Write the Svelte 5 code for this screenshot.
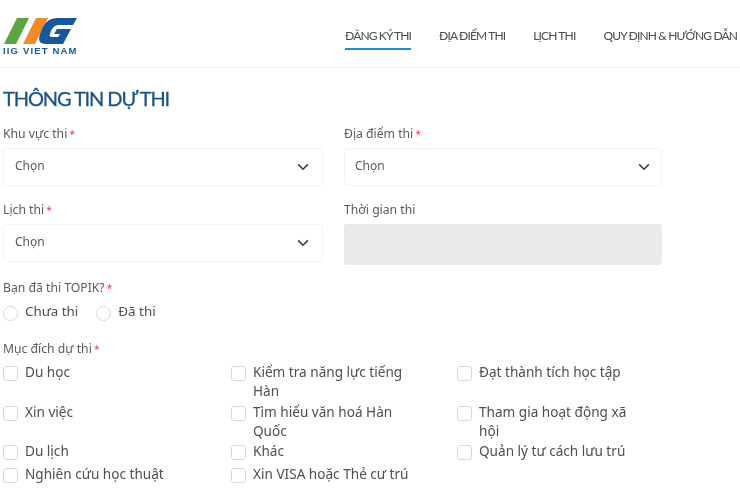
<script lang="ts">
  const nav = ['ĐĂNG KÝ THI', 'ĐỊA ĐIỂM THI', 'LỊCH THI', 'QUY ĐỊNH & HƯỚNG DẪN'];
  const purposes = [
    'Du học',
    'Kiểm tra năng lực tiếng Hàn',
    'Đạt thành tích học tập',
    'Xin việc',
    'Tìm hiểu văn hoá Hàn Quốc',
    'Tham gia hoạt động xã hội',
    'Du lịch',
    'Khác',
    'Quản lý tư cách lưu trú',
    'Nghiên cứu học thuật',
    'Xin VISA hoặc Thẻ cư trú'
  ];
</script>

{#snippet chevron()}
  <svg class="chevron" width="12" height="8" viewBox="0 0 12 8" aria-hidden="true">
    <path d="M1.2 1.4 6 6.2l4.8-4.8" fill="none" stroke="#3a3f45" stroke-width="1.6" />
  </svg>
{/snippet}

{#snippet select()}
  <div class="select">
    <span>Chọn</span>
    {@render chevron()}
  </div>
{/snippet}

<div class="page">
  <header class="topbar">
    <div class="logo">
      <svg width="74" height="28" viewBox="0 0 74 28" aria-hidden="true">
        <polygon points="1,27 14,1 26,1 13,27" fill="#5ba442" />
        <polygon points="20,27 33,1 45,1 32,27" fill="#f28a2c" />
        <path d="M74,1 L70,8 H56 C52,8 50,10 48,14 L47,17 C46,19 47,20 49,20 H55 L57,17 H51 L54,12 H68 L60,27 H43 C36,27 35,23 37,17 L40,10 C43,4 48,1 55,1 Z" fill="#17589a" />
      </svg>
      <span class="logo-text">IIG VIET NAM</span>
    </div>
    <nav class="nav">
      {#each nav as item, i}
        <a href="#top" class:active={i === 0}>{item}</a>
      {/each}
    </nav>
  </header>

  <main class="content">
    <h1>THÔNG TIN DỰ THI</h1>

    <div class="fields">
      <div class="field">
        <label>Khu vực thi <em>*</em></label>
        {@render select()}
      </div>
      <div class="field second">
        <label>Địa điểm thi <em>*</em></label>
        {@render select()}
      </div>
      <div class="field">
        <label>Lịch thi <em>*</em></label>
        {@render select()}
      </div>
      <div class="field">
        <label>Thời gian thi</label>
        <div class="disabled"></div>
      </div>
    </div>

    <div class="group topik">
      <label>Bạn đã thi TOPIK? <em>*</em></label>
      <div class="radios">
        <span class="option"><i class="radio"></i>Chưa thi</span>
        <span class="option"><i class="radio"></i>Đã thi</span>
      </div>
    </div>

    <div class="group">
      <label>Mục đích dự thi <em>*</em></label>
      <div class="checks">
        {#each purposes as p}
          <div class="check"><i class="box"></i><span>{p}</span></div>
        {/each}
      </div>
    </div>
  </main>
</div>

<style>
  :global(body) {
    margin: 0;
    background: #fff;
  }

  .page {
    width: 740px;
    height: 497px;
    overflow: hidden;
    font-family: 'Noto Sans', 'Open Sans', sans-serif;
    color: #4a5056;
    filter: blur(0.35px);
  }

  .topbar {
    height: 68px;
    box-sizing: border-box;
    border-bottom: 1px solid #f0f1f2;
    display: flex;
    padding-left: 3px;
  }

  .logo {
    flex: none;
    width: 342px;
    padding-top: 17px;
    display: flex;
    flex-direction: column;
  }

  .logo svg {
    display: block;
  }

  .logo-text {
    margin-top: 1px;
    font-family: 'Liberation Sans', sans-serif;
    font-size: 9.5px;
    line-height: 10px;
    font-weight: 700;
    letter-spacing: 1.15px;
    color: #17589a;
  }

  .nav {
    display: flex;
    gap: 28px;
    font-family: Lato, sans-serif;
    font-size: 12px;
    letter-spacing: -0.85px;
    white-space: nowrap;
  }

  .nav a {
    color: #484c50;
    text-decoration: none;
    height: 22px;
    margin-top: 28px;
    line-height: 16px;
    box-sizing: border-box;
  }

  .nav a.active {
    border-bottom: 2.5px solid #1f8fd6;
  }

  .content {
    padding: 0 3px;
  }

  h1 {
    margin: 18px 0 0;
    font-family: Lato, sans-serif;
    font-size: 20px;
    line-height: 24px;
    font-weight: 400;
    letter-spacing: -1.1px;
    -webkit-text-stroke: 0.3px #1c5489;
    color: #1c5489;
  }

  label {
    display: block;
    font-size: 12.2px;
    line-height: 16px;
    color: #565c62;
  }

  em {
    color: #e2454a;
    font-style: normal;
    font-size: 10px;
    margin-left: -1px;
  }

  .fields {
    display: grid;
    grid-template-columns: 320px 318px;
    column-gap: 21px;
    row-gap: 16px;
    margin-top: 16px;
  }

  .field label {
    margin-bottom: 6px;
  }

  .select {
    height: 38px;
    box-sizing: border-box;
    border: 1px solid #f1f2f3;
    border-radius: 3px;
    display: flex;
    align-items: center;
    justify-content: space-between;
    padding: 0 13px 3px 11px;
    font-size: 12px;
    color: #555a60;
  }

  .second .select {
    padding-left: 10px;
    padding-right: 11px;
  }

  .chevron {
    margin-top: 3px;
  }

  .disabled {
    height: 41px;
    border-radius: 3px;
    background: #e9eaec;
  }

  .topik {
    margin-top: 15px;
  }

  .radios {
    display: flex;
    gap: 18px;
    margin-top: 5px;
  }

  .option {
    display: flex;
    align-items: center;
    gap: 7px;
    font-size: 13.4px;
    line-height: 20px;
  }

  .radio {
    width: 13px;
    height: 13px;
    margin-top: 4px;
    border: 1px solid #d6d8da;
    border-radius: 50%;
  }

  .group:last-child {
    margin-top: 20px;
  }

  .checks {
    display: grid;
    grid-template-columns: 228px 226px 190px;
    grid-template-rows: 40px 39px 23px auto;
    margin-top: 5px;
    font-size: 13.6px;
    line-height: 19px;
  }

  .check {
    display: flex;
    gap: 7px;
  }

  .check span {
    max-width: 170px;
  }

  .box {
    flex: none;
    width: 13px;
    height: 13px;
    margin-top: 4px;
    border: 1px solid #d6d8da;
    border-radius: 3px;
  }
</style>
